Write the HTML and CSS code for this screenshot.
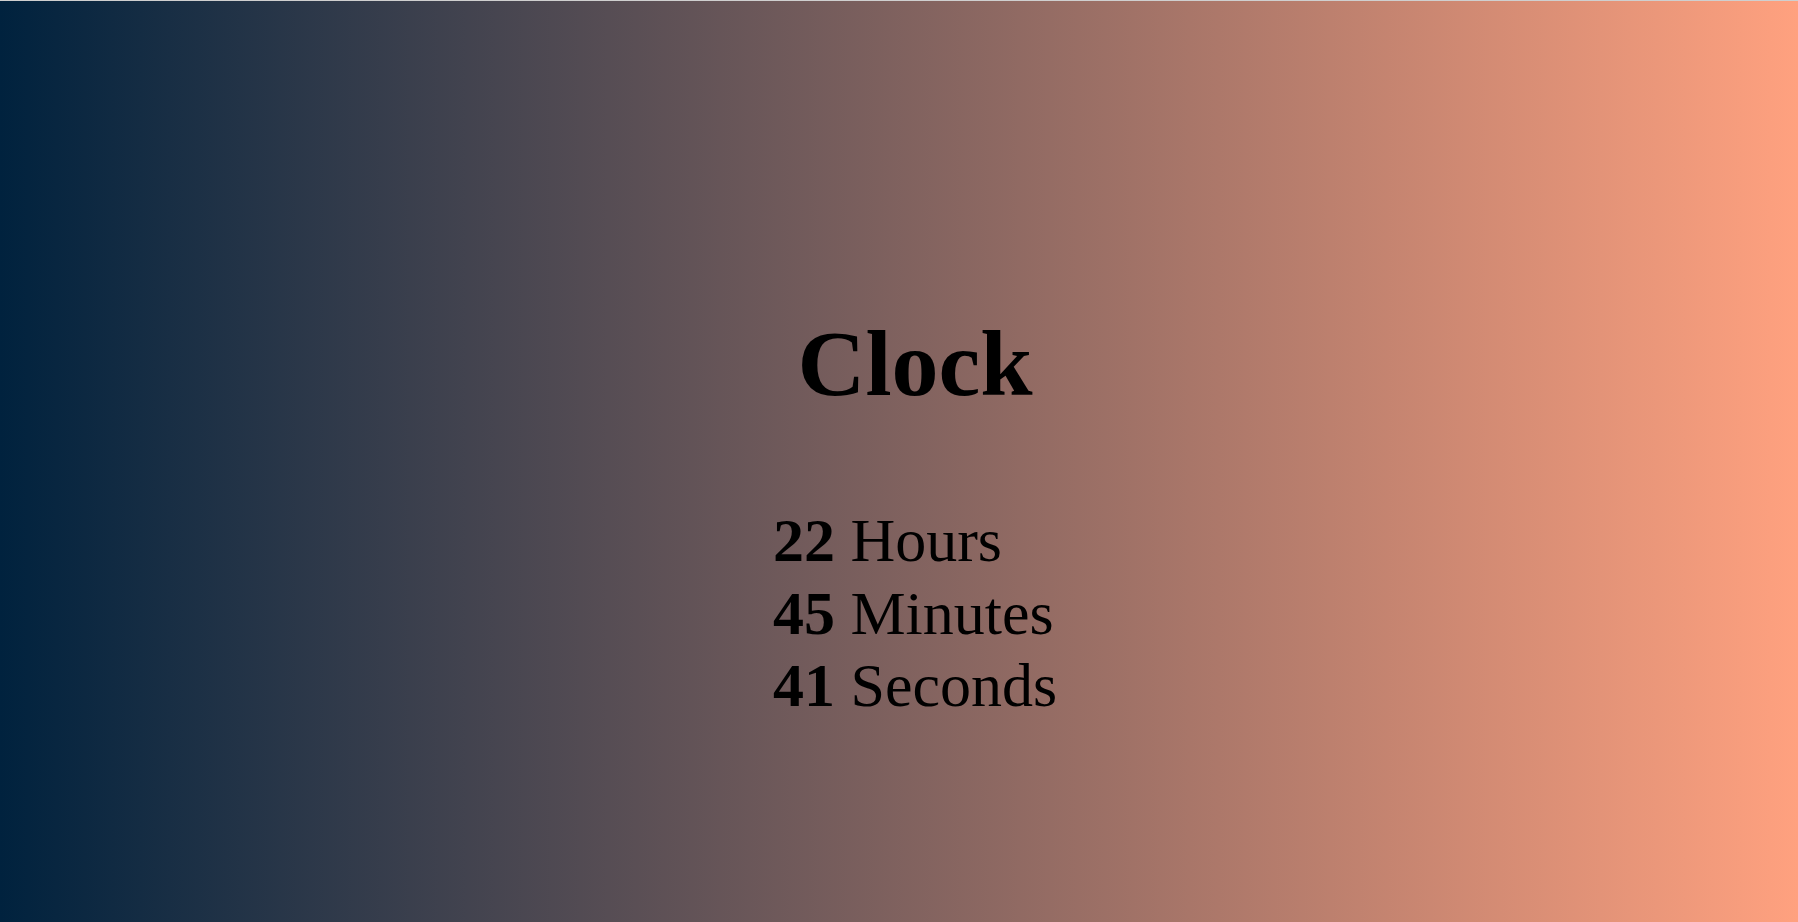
FILE: index.html
```html
<!DOCTYPE html>
<html lang="en">
<head>
<meta charset="utf-8">
<title>Clock</title>
<link rel="stylesheet" href="styles.css">
</head>
<body>
  <main class="clock">
    <h1 class="clock-title">Clock</h1>
    <div class="clock-time">
      <div class="clock-row"><span class="clock-num">22</span> Hours</div>
      <div class="clock-row"><span class="clock-num">45</span> Minutes</div>
      <div class="clock-row"><span class="clock-num">41</span> Seconds</div>
    </div>
  </main>
</body>
</html>
```
FILE: styles.css
```css
html, body {
  margin: 0;
  padding: 0;
  height: 100%;
}

body {
  box-sizing: border-box;
  border-top: 1px solid #cfcfcf;
  background: linear-gradient(to right, #00223e, #ffa17f);
  font-family: "Liberation Serif", "Times New Roman", serif;
  color: #000;
  overflow: hidden;
}

.clock {
  display: flex;
  flex-direction: column;
  align-items: center;
  padding-top: 307px;
  padding-left: 32px;
}

.clock-title {
  margin: 0;
  font-size: 94px;
  font-weight: bold;
  line-height: 110px;
}

.clock-time {
  margin-top: 86px;
  font-size: 62px;
  line-height: 72.5px;
}

.clock-num {
  font-weight: bold;
}
```
